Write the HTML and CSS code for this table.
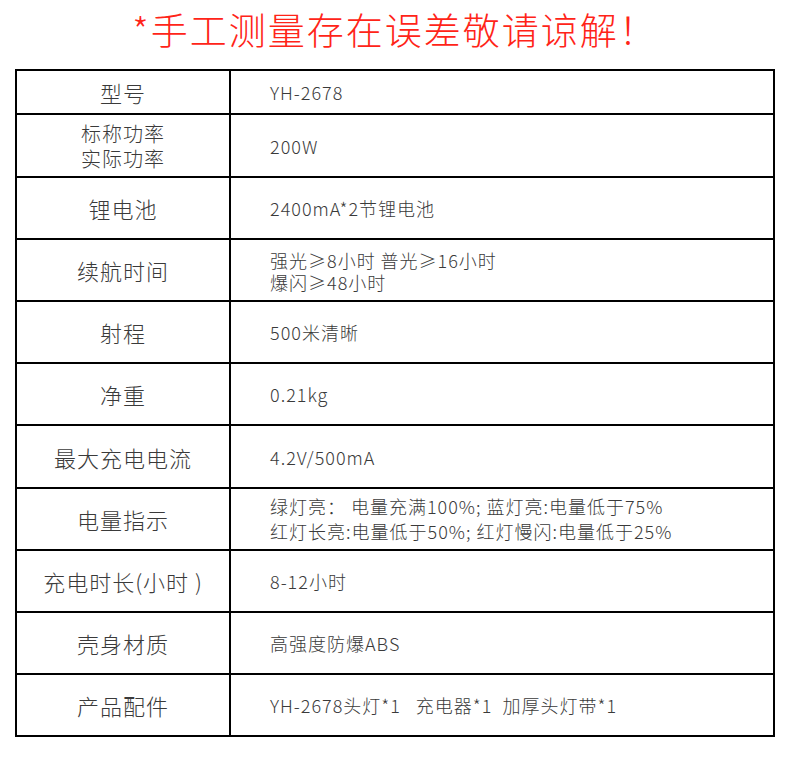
FILE: index.html
```html
<!DOCTYPE html>
<html lang="zh">
<head>
<meta charset="utf-8">
<title>参数</title>
<link rel="stylesheet" href="styles.css">
</head>
<body>
<h1 class="title">*手工测量存在误差敬请谅解！</h1>
<div class="spec">
  <div class="row r-first"><div class="k">型号</div><div class="v">YH-2678</div></div>
  <div class="row r-tall"><div class="k k-small">标称功率<br>实际功率</div><div class="v">200W</div></div>
  <div class="row"><div class="k">锂电池</div><div class="v">2400mA*2节锂电池</div></div>
  <div class="row"><div class="k">续航时间</div><div class="v v-two">强光≥8小时 普光≥16小时<br>爆闪≥48小时</div></div>
  <div class="row"><div class="k">射程</div><div class="v">500米清晰</div></div>
  <div class="row"><div class="k">净重</div><div class="v">0.21kg</div></div>
  <div class="row r-tall"><div class="k">最大充电电流</div><div class="v">4.2V/500mA</div></div>
  <div class="row"><div class="k">电量指示</div><div class="v v-lines">绿灯亮：&nbsp;电量充满100%; 蓝灯亮:电量低于75%<br>红灯长亮:电量低于50%; 红灯慢闪:电量低于25%</div></div>
  <div class="row"><div class="k">充电时长(小时 )</div><div class="v">8-12小时</div></div>
  <div class="row"><div class="k">壳身材质</div><div class="v">高强度防爆ABS</div></div>
  <div class="row r-last"><div class="k">产品配件</div><div class="v">YH-2678头灯*1&nbsp;&nbsp; 充电器*1&nbsp; 加厚头灯带*1</div></div>
</div>
</body>
</html>
```
FILE: styles.css
```css
html, body {
  margin: 0;
  padding: 0;
  background: #ffffff;
}
body {
  width: 790px;
  font-family: "Noto Sans CJK SC", "Noto Sans", sans-serif;
  color: #3a3a3a;
}
.title {
  margin: 0;
  height: 69px;
  box-sizing: border-box;
  padding-top: 3px;
  text-align: center;
  font-size: 37px;
  font-weight: 300;
  letter-spacing: 2px;
  line-height: 52px;
  color: #ff2418;
}
.spec {
  margin-left: 15px;
  width: 760px;
  box-sizing: border-box;
  border: 2px solid #000;
}
.row {
  display: grid;
  grid-template-columns: 214px 1fr;
  height: 62px;
  border-bottom: 2px solid #000;
  box-sizing: border-box;
}
.row.r-first { height: 44px; }
.row.r-tall { height: 63px; }
.row.r-last { border-bottom: 0; height: 60px; }
.k {
  border-right: 2px solid #000;
  display: flex;
  align-items: center;
  justify-content: center;
  text-align: center;
  font-size: 22px;
  font-weight: 300;
  letter-spacing: 1px;
  line-height: 26px;
}
.k-small {
  font-size: 20px;
  line-height: 25px;
}
.v {
  display: flex;
  align-items: center;
  padding-left: 39px;
  font-size: 18px;
  font-weight: 300;
  letter-spacing: 1px;
  line-height: 22px;
}
.v-two {
  padding-top: 2px;
}
.v-lines {
  line-height: 25px;
}
```
